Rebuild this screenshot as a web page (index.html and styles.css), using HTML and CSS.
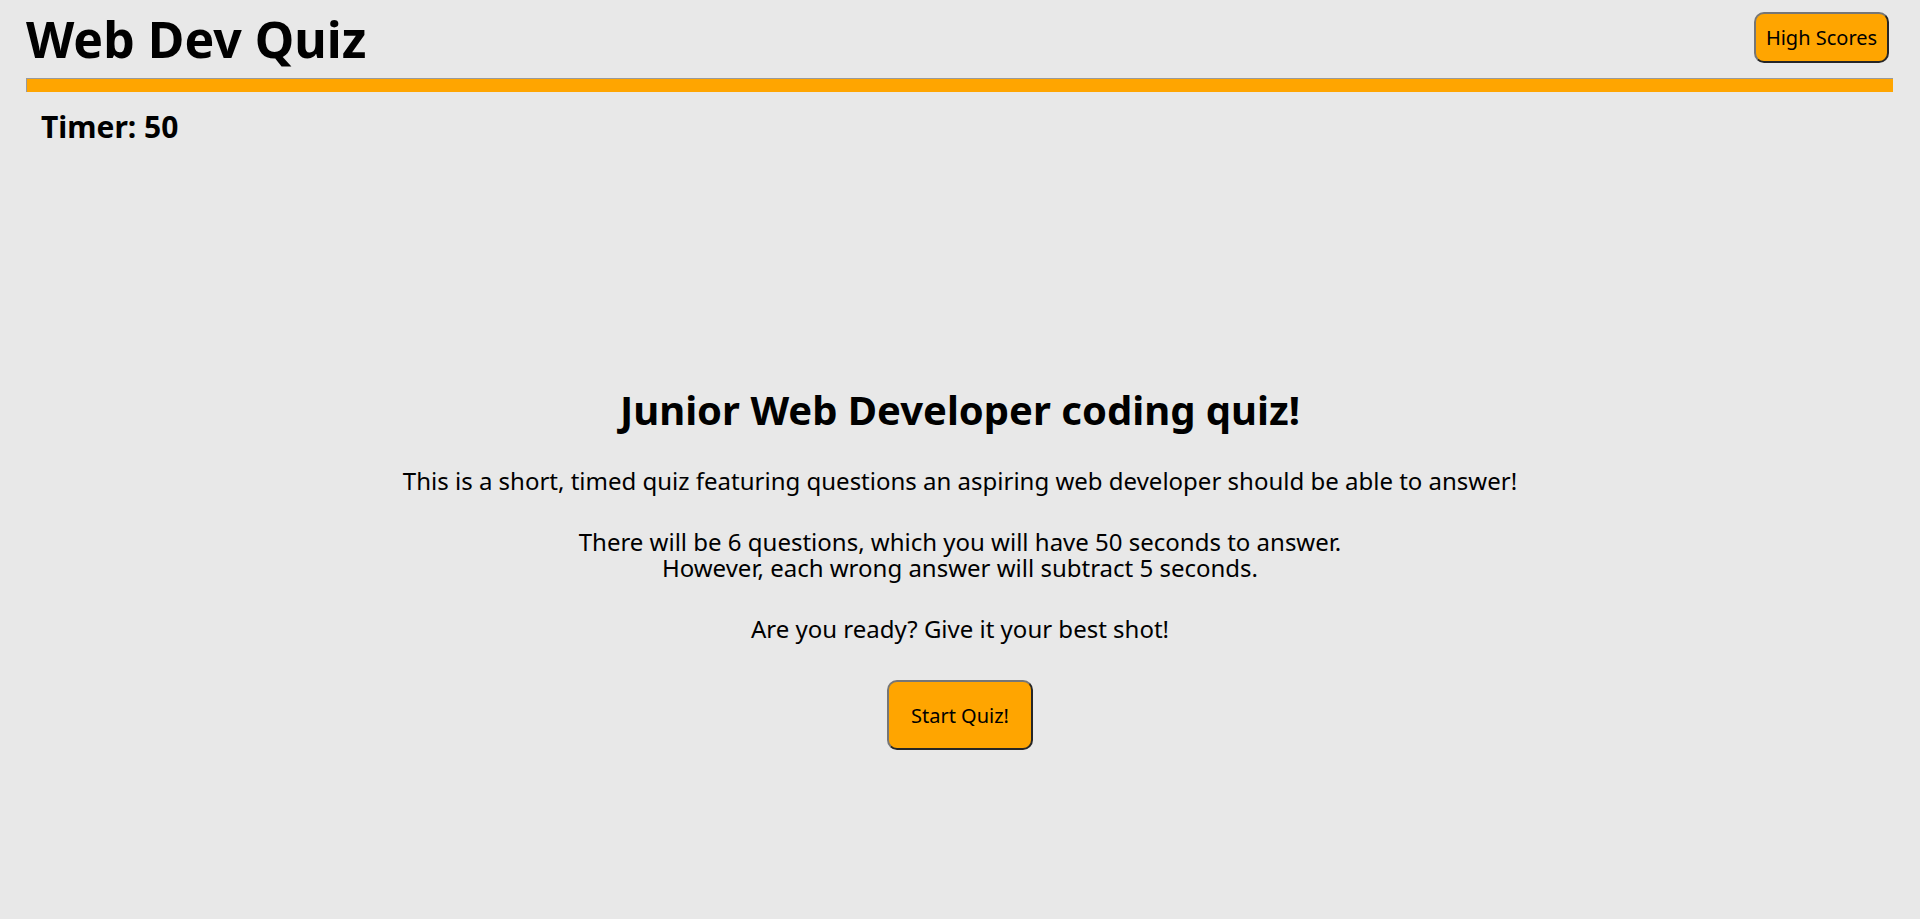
FILE: index.html
```html
<!DOCTYPE html>
<html lang="en">
<head>
<meta charset="utf-8">
<title>Web Dev Quiz</title>
<link rel="stylesheet" href="styles.css">
</head>
<body>
  <header class="topbar">
    <h1 class="site-title">Web Dev Quiz</h1>
    <button class="btn btn-scores">High Scores</button>
  </header>
  <hr class="divider">
  <div class="timer">Timer: 50</div>
  <main class="intro">
    <h2 class="intro-title">Junior Web Developer coding quiz!</h2>
    <p class="intro-text">This is a short, timed quiz featuring questions an aspiring web developer should be able to answer!</p>
    <p class="intro-text">There will be 6 questions, which you will have 50 seconds to answer.<br>However, each wrong answer will subtract 5 seconds.</p>
    <p class="intro-text">Are you ready? Give it your best shot!</p>
    <button class="btn btn-start">Start Quiz!</button>
  </main>
</body>
</html>
```

FILE: styles.css
```css
* { box-sizing: border-box; }

html, body {
  margin: 0;
  padding: 0;
}

body {
  background: #e8e8e8;
  color: #000;
  font-family: "Noto Sans", "Open Sans", sans-serif;
  min-height: 919px;
}

.topbar {
  display: flex;
  justify-content: space-between;
  align-items: flex-start;
  padding: 0 31px 0 26px;
}

.site-title {
  margin: 7px 0 0 0;
  font-size: 50px;
  font-weight: 700;
  line-height: 64px;
}

.btn {
  font-family: "Noto Sans", "Open Sans", sans-serif;
  font-size: 20px;
  color: #000;
  background: #ffa500;
  border-width: 2px;
  border-style: solid;
  border-color: #767676 #262626 #262626 #767676;
  border-radius: 10px;
  cursor: pointer;
}

.btn-scores {
  margin-top: 12px;
  width: 135px;
  height: 51px;
  padding: 0;
}

.divider {
  margin: 7px 27px 0 26px;
  height: 14px;
  background: #ffa500;
  border-width: 1px 0 0 1px;
  border-style: solid;
  border-color: #9a9a9a;
}

.timer {
  margin: 18px 0 0 41px;
  font-size: 30px;
  font-weight: 700;
  line-height: 34px;
}

.intro {
  display: flex;
  flex-direction: column;
  align-items: center;
  text-align: center;
  margin-top: 242px;
}

.intro-title {
  margin: 0;
  font-size: 40px;
  font-weight: 700;
  line-height: 48px;
}

.intro-text {
  margin: 34px 0 0 0;
  font-size: 24px;
  line-height: 26px;
}

.intro-text + .intro-text {
  margin-top: 35px;
}

.btn-start {
  margin-top: 38px;
  width: 146px;
  height: 70px;
  padding: 0;
}
```
